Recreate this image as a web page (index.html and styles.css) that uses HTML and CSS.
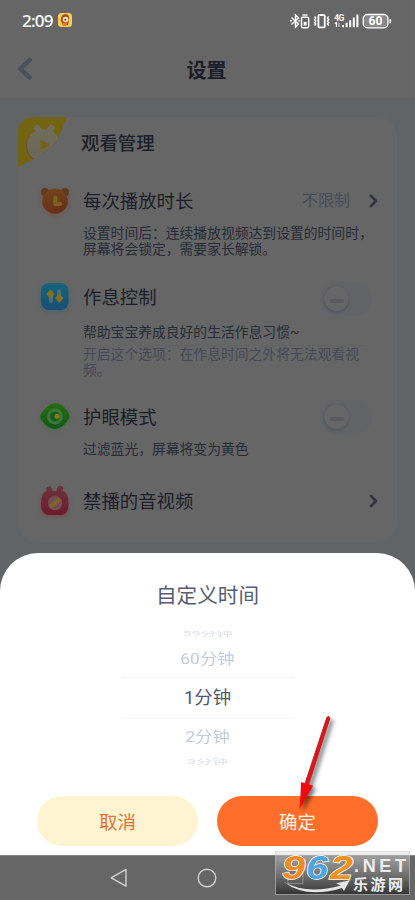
FILE: index.html
```html
<!DOCTYPE html>
<html lang="zh-CN">
<head>
<meta charset="utf-8">
<title>设置</title>
<link rel="stylesheet" href="styles.css">
</head>
<body>
<div class="phone">
  <header class="status">
    <div class="clock">2:09</div>
    <svg class="app-badge" width="14" height="14" viewBox="0 0 14 14"><rect width="14" height="14" rx="3.5" fill="#f6cd55"/><path d="M3 5Q4 1 8 1Q12 2 11 7L10 12L5 13L4 10Q2 8 3 5Z" fill="#a4501f"/><circle cx="7.6" cy="6.5" r="2.8" fill="#ffe6c0"/><circle cx="7.3" cy="6.8" r="1" fill="#63391f"/><path d="M5 10l4 0-1 3-3 0z" fill="#e67b28"/></svg>
    <svg class="status-icons" width="102" height="18" viewBox="0 0 102 18" fill="none" stroke="#fff" stroke-width="1.4">
      <path d="M1.5 5.5L8.5 12L5.5 15V3L8.5 6L1.5 12.5"/><path d="M.2 8.9h1.6M8.4 8.9h1.4" stroke-width="1.6"/>
      <path d="M12.5 3h5"/><rect x="11.5" y="5.2" width="7.2" height="10.5" rx="1.4"/><rect x="13.6" y="10" width="3" height="3.5" fill="#fff" stroke="none"/>
      <rect x="28.4" y="3" width="6.3" height="12.4" rx="1" stroke-width="1.8"/><path d="M24.5 4.5l1.3 1.5-1.3 1.5 1.3 1.5-1.3 1.5 1.3 1.5-1.3 1.5M38.7 4.5L37.4 6l1.3 1.5L37.4 9l1.3 1.5-1.3 1.5 1.3 1.5" stroke-width="1.4"/>
      <text x="44.2" y="8.7" class="net">4G</text><path d="M46.5 10v5M45 12l1.5-2" stroke-width="1.2"/><path d="M49 11v4" stroke="#aaa" stroke-width="1.8"/>
      <path d="M53 13v2.3M56.6 10.7v4.6M60.2 8.3v7M63.8 5.5v9.8M67.4 2.6v12.7" stroke-width="2"/>
      <rect x="73.2" y="2.5" width="24.8" height="13.3" rx="4.2" fill="#888" stroke-width="1.3"/><path d="M100.3 7.2v4" stroke-width="1.6"/>
      <text x="85.5" y="13.3" class="charge">60</text>
    </svg>
  </header>
  <div class="titlebar">
    <svg width="16" height="24" viewBox="0 0 16 24"><path d="M12.8 3L3.3 11.8L12.8 20.6" fill="none" stroke="#4b4f5e" stroke-width="4.4" stroke-linecap="round" stroke-linejoin="round"/></svg>
    <h1>设置</h1>
  </div>
  <main>
    <section class="card">
      <div class="card-head">
        <svg width="50" height="50" viewBox="0 0 50 50">
          <defs><clipPath id="fold"><path d="M0 50V17Q0 0 17 0H49Q41 21 36 27Q26 38 0 50Z"/></clipPath><linearGradient id="face" x2="0" y2="1"><stop stop-color="#716e5b"/><stop offset="1" stop-color="#6a6659"/></linearGradient></defs>
          <g clip-path="url(#fold)"><rect width="50" height="50" fill="#736414"/><circle cx="24" cy="29.5" r="16" fill="#6a5421"/><circle cx="25.5" cy="28.5" r="16.5" fill="url(#face)"/><path d="M21 14l-2-3M31.5 14l2-3" stroke="#716e5b" stroke-width="6" stroke-linecap="round"/><path d="M22.5 24.5q0-1.7 1.7-.9l6.5 3.5q1.2.9 0 1.8l-6.5 3.6q-1.7.8-1.7-1z" fill="#76631b"/></g>
        </svg>
        <h2>观看管理</h2>
      </div>

      <div class="row duration">
        <svg class="icon orange" width="30" height="30" viewBox="0 0 30 30"><defs><linearGradient id="bear" x2=".3" y2="1"><stop stop-color="#71471e"/><stop offset="1" stop-color="#6d2e17"/></linearGradient></defs><circle cx="5" cy="6" r="4" fill="#613c1c"/><circle cx="25" cy="6" r="4" fill="#613c1c"/><ellipse cx="15" cy="15.2" rx="12.8" ry="12.5" fill="url(#bear)"/><path d="M15.3 11.4v6.7h5" fill="none" stroke="#7b6422" stroke-width="4" stroke-linecap="round" stroke-linejoin="round"/></svg>
        <h3>每次播放时长</h3>
        <span class="value">不限制</span>
        <svg class="chevron" width="9" height="14" viewBox="0 0 9 14"><path d="M1.9 1.9L7 7L1.9 12.1" fill="none" stroke="#30343e" stroke-width="2.7" stroke-linecap="round" stroke-linejoin="round"/></svg>
      </div>
      <p class="desc two">设置时间后：连续播放视频达到设置的时间时，<br>屏幕将会锁定，需要家长解锁。</p>

      <div class="row schedule">
        <svg class="icon blue" width="30" height="30" viewBox="0 0 30 30"><defs><linearGradient id="aqua" x2="0" y2="1"><stop stop-color="#146578"/><stop offset="1" stop-color="#1c4c78"/></linearGradient></defs><rect x="1" y="1" width="27.5" height="27" rx="8" fill="url(#aqua)"/><path d="M11 10v9M19 9v9" stroke="#436e7d" stroke-width="4" stroke-linecap="round"/><path d="M10.5 8.8l2.9 3.4-2.9 3.4-2.9-3.4zM19.3 12.8l2.9 3.4-2.9 3.4-2.9-3.4z" fill="#807024" stroke="#807024" stroke-width="2" stroke-linejoin="round"/></svg>
        <h3>作息控制</h3>
        <span class="switch"><i></i></span>
      </div>
      <p class="desc">帮助宝宝养成良好的生活作息习惯~</p>
      <p class="note">开启这个选项：在作息时间之外将无法观看视<br>频。</p>

      <div class="row eyecare">
        <svg class="icon green" width="32" height="30" viewBox="0 0 32 30"><defs><linearGradient id="leaf" x2="0" y2="1"><stop stop-color="#2a6c14"/><stop offset="1" stop-color="#105818"/></linearGradient></defs><path d="M1.5 13Q5 7 10 3Q16 -.6 23 3Q28 7 30.5 13Q31.5 15 29 18Q24 26 16 27Q8 26 3 19Q.2 15 1.5 13Z" fill="url(#leaf)"/><circle cx="16" cy="14.5" r="8" fill="#3b7537"/><circle cx="16" cy="14.5" r="4.8" fill="#125e19"/><circle cx="18" cy="14.3" r="2.6" fill="#867c1d"/></svg>
        <h3>护眼模式</h3>
        <span class="switch"><i></i></span>
      </div>
      <p class="desc">过滤蓝光，屏幕将变为黄色</p>

      <div class="row blocked">
        <svg class="icon red" width="30" height="32" viewBox="0 0 30 32"><defs><linearGradient id="rose" x2="0" y2="1"><stop stop-color="#6b303b"/><stop offset="1" stop-color="#6d1b2b"/></linearGradient></defs><path d="M9.8 6L9.2 4.4M19.5 6l.7-2.4" stroke="#6a303a" stroke-width="5.5" stroke-linecap="round"/><path d="M8 6H22Q28 6 28.5 18Q28.5 30 21 30H9Q1 30 1 19Q1 6 8 6Z" fill="url(#rose)"/><circle cx="15" cy="18" r="7.3" fill="#784b54"/><path d="M10.2 21.4L19.8 14.7" stroke="#7b6825" stroke-width="4"/></svg>
        <h3>禁播的音视频</h3>
        <svg class="chevron" width="9" height="14" viewBox="0 0 9 14"><path d="M1.9 1.9L7 7L1.9 12.1" fill="none" stroke="#30343e" stroke-width="2.7" stroke-linecap="round" stroke-linejoin="round"/></svg>
      </div>
    </section>
  </main>

  <section class="sheet">
    <h2>自定义时间</h2>
    <div class="picker">
      <div class="option far top"><span>59分钟</span></div>
      <div class="option near"><span>60分钟</span></div>
      <div class="option current"><span>1分钟</span></div>
      <div class="option near next"><span>2分钟</span></div>
      <div class="option far bottom"><span>3分钟</span></div>
    </div>
    <div class="actions"><button class="cancel">取消</button><button class="confirm">确定</button></div>
  </section>

  <nav>
    <svg width="18" height="20" viewBox="0 0 18 20"><path d="M16 1.4V18.2L1.2 9.8Z" fill="none" stroke="#d2d2d2" stroke-width="1.4" stroke-linejoin="round"/></svg>
    <svg width="20" height="20" viewBox="0 0 20 20"><circle cx="10" cy="10" r="8.8" fill="none" stroke="#d2d2d2" stroke-width="1.4"/></svg>
    <svg width="18" height="18" viewBox="0 0 18 18"><rect x="1.5" y="1.5" width="15" height="15" fill="none" stroke="#aaa"/></svg>
  </nav>

  <svg class="arrow" width="36" height="98" viewBox="0 0 36 98"><path d="M32.8 4.5L11.5 71L8 69.5L29.9 3.3Q32.4 1 32.8 4.5Z" fill="#e0151a" stroke="#b51217" stroke-width=".8"/><path d="M4.2 68L16 71.8L2.6 95z" fill="#f90606"/></svg>

  <svg class="watermark" width="136" height="48" viewBox="0 0 136 48">
    <defs><linearGradient id="plate" x2="0" y2="1"><stop stop-color="#e2e2e2" stop-opacity=".35"/><stop offset=".25" stop-color="#999" stop-opacity=".8"/><stop offset="1" stop-color="#333"/></linearGradient></defs>
    <rect x=".5" y=".5" width="134" height="43" fill="url(#plate)" stroke="#c8c8c8" stroke-opacity=".6"/>
    <path d="M13 18.5h15v14H13z" fill="none" stroke="#aaa" stroke-opacity=".6"/>
    <path d="M9 31Q32 44 66 34.5L61 32.5L75 29L69 40L67 37Q31 48 9 31Z" fill="#e5e5e5"/>
    <g class="digits"><text x="7" y="27.5" fill="#f08b24" textLength="23" lengthAdjust="spacingAndGlyphs">9</text><text x="31" y="27.5" fill="#4da6df" textLength="22" lengthAdjust="spacingAndGlyphs">6</text><text x="55" y="27.5" fill="#ef931e" textLength="23" lengthAdjust="spacingAndGlyphs">2</text></g>
    <text x="79" y="20.5" class="net-name" textLength="52" lengthAdjust="spacing">.NET</text>
    <text x="78" y="39" class="site-name" textLength="50" lengthAdjust="spacing">乐游网</text>
  </svg>
</div>
</body>
</html>
```

FILE: styles.css
```css
* { box-sizing: border-box; }
body { margin: 0; font-family: Roboto, "Noto Sans CJK SC", sans-serif; }
h1, h2, h3, p { margin: 0; font-weight: 400; }
svg { display: block; flex: none; }
.phone { position: relative; width: 415px; height: 900px; overflow: hidden; background: #616467; display: flex; flex-direction: column; }

.status { height: 40px; flex: none; background: #666; display: flex; align-items: center; padding-left: 22px; }
.clock { width: 36px; font: 500 17px/20px "Noto Sans", sans-serif; color: #fff; letter-spacing: -.8px; padding-top: 1px; }
.status-icons { margin-left: 218px; margin-top: 1px; overflow: visible; }
.net { font: 700 8.5px Roboto, sans-serif; fill: #fff; stroke: none; letter-spacing: -.5px; }
.charge { font: 700 12px Roboto, sans-serif; fill: #fff; stroke: none; text-anchor: middle; }

.titlebar { height: 58px; flex: none; background: #666; display: flex; align-items: center; padding: 0 17px; }
.titlebar h1 { flex: 1; text-align: center; padding: 3px 18px 0 0; font-size: 20px; line-height: 24px; font-weight: 700; color: #1b1d28; }

main { height: 455px; flex: none; padding: 19px 18px 0; }
.card { height: 425px; border-radius: 19px; background: #666; }
.card-head { height: 67px; display: flex; align-items: flex-start; }
.card-head h2 { margin: 14px 0 0 13px; font-size: 18.4px; line-height: 25px; font-weight: 500; color: #1d202b; }
.row { display: flex; align-items: center; padding: 0 19px 0 22px; }
.icon { width: 30px; margin-right: 13px; overflow: visible; }
.icon.green { width: 32px; margin: 0 12px 0 -1px; }
.orange { filter: drop-shadow(0 2px 2px #77412660); }
.blue { filter: drop-shadow(0 2px 2px #28627a80); }
.green { filter: drop-shadow(0 2px 2px #31713680); }
.red { filter: drop-shadow(0 2px 2px #88303d80); }
.row h3 { flex: 1; padding-top: 1px; font-size: 18.4px; line-height: 25px; color: #1b1e29; }
.value { font-size: 16px; line-height: 22px; color: #484c59; margin-right: 19px; padding-top: 1px; }
.duration { height: 33px; }
.desc { margin-left: 65px; font-size: 13.8px; line-height: 16px; color: #272b36; white-space: nowrap; }
.desc.two { padding-top: 8px; height: 60px; }
.schedule { height: 40px; }
.schedule + .desc { padding-top: 7px; height: 28px; }
.note { margin-left: 65px; height: 50px; font-size: 13.8px; line-height: 16px; color: #454957; border-top: 1px solid #616265; width: 283px; white-space: nowrap; }
.eyecare { height: 44px; }
.eyecare + .desc { padding-top: 2px; height: 38px; }
.blocked { height: 47px; }
.switch { width: 52px; height: 34px; padding: 4px; border-radius: 17px; background: #626467; margin: 4px 6px 0 0; }
.eyecare .switch { margin-top: 0; }
.switch i { display: flex; width: 25px; height: 25px; border-radius: 50%; background: #666; box-shadow: 0 2px 2px #484d5780, 0 0 1px #50535a; align-items: center; justify-content: center; }
.switch i::after { content: ""; width: 14px; height: 4px; margin-top: 4px; border-radius: 2px; background: #595b60; }

.sheet { height: 302px; flex: none; background: #fff; border-radius: 38px 38px 0 0; display: flex; flex-direction: column; align-items: center; }
.sheet h2 { padding-top: 29px; height: 78px; font-size: 20.6px; line-height: 28px; color: #565d70; }
.picker { width: 172px; height: 136px; display: flex; flex-direction: column; text-align: center; }
.option { display: flex; align-items: center; justify-content: center; flex: none; overflow: hidden; }
.option span { white-space: nowrap; }
.near { height: 38px; padding-top: 2px; color: #c2cbdc; font-size: 17.4px; line-height: 24px; }
.near.next { padding: 0 0 2px; }
.near span { transform: scaleY(.84); }
.current { height: 42px; border: solid #f4f5f8; border-width: 1px 0; font-size: 18.4px; line-height: 26px; color: #50586b; padding-bottom: 1px; }
.far { height: 8px; color: #dce1eb; font-size: 16px; line-height: 18px; }
.far span { transform: scaleY(.42); }
.far.top span { margin-top: -2px; }
.far.bottom { margin-top: 1px; }
.actions { margin-top: 29px; display: flex; gap: 19px; }
button { width: 161px; height: 50px; border: 0; border-radius: 25px; padding: 0 0 1px; font: 400 18.4px/26px "Noto Sans CJK SC", sans-serif; }
.cancel { background: #fff4d1; color: #e07437; }
.confirm { background: #ff6e2a; color: #fff7ed; }

nav { height: 45px; flex: none; background: #666; border-top: 1px solid #858787; display: flex; align-items: center; justify-content: center; gap: 69px; }
nav svg { position: relative; left: -1px; }
.arrow { position: absolute; left: 297px; top: 714px; overflow: visible; filter: drop-shadow(3px 3px 2px #0008); }
.watermark { position: absolute; left: 275px; top: 851px; overflow: visible; }
.digits { font: italic 700 33px "Liberation Sans", sans-serif; stroke: #fff; stroke-width: 1.4px; paint-order: stroke; }
.net-name { font: 700 18px "Liberation Sans", sans-serif; fill: #eee; }
.site-name { font: 700 15px "Noto Sans CJK SC", sans-serif; fill: #eee; }
```
